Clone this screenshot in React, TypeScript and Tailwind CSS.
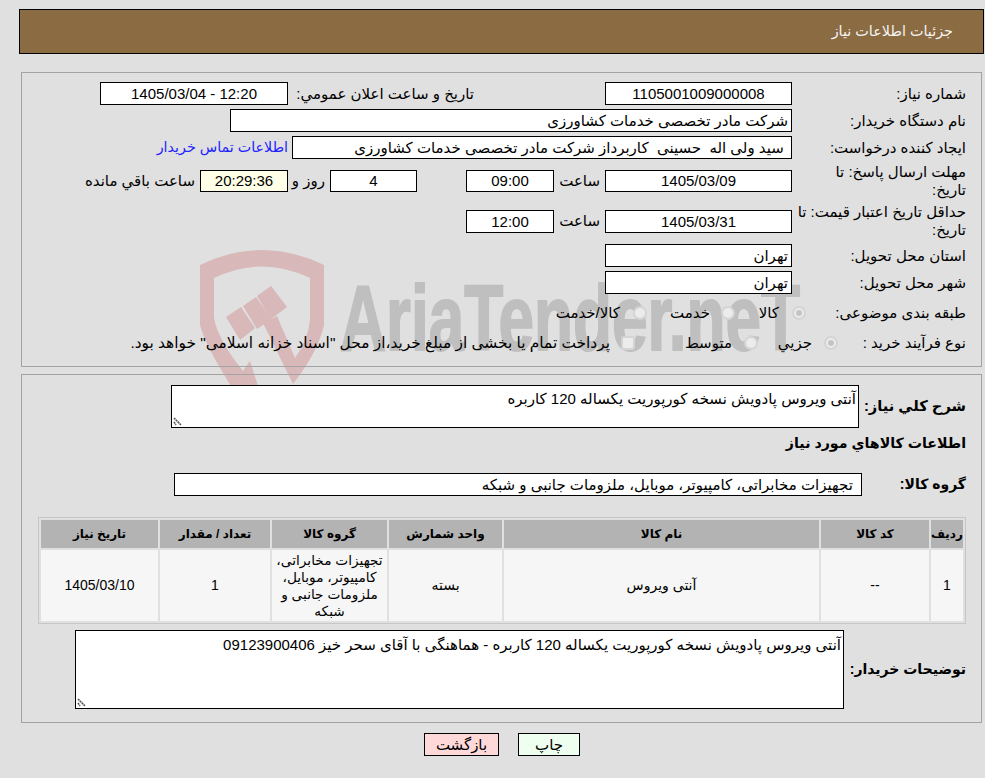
import React from "react";

const boxClass =
  "border border-black bg-white px-[3px] text-[15px] text-black outline-none";

function Field({
  value,
  className = "",
  height = "h-[23px]",
}: {
  value: string;
  className?: string;
  height?: string;
}) {
  return <input readOnly dir="rtl" value={value} className={`${boxClass} ${height} ${className}`} />;
}

function Radio({ checked = false }: { checked?: boolean }) {
  return (
    <span className="flex h-[14px] w-[14px] shrink-0 items-center justify-center rounded-full border-2 border-[#d4d4d4] bg-[#ececec]">
      {checked && <span className="h-[6px] w-[6px] rounded-full bg-[#c4c4c4]" />}
    </span>
  );
}

function Label({ children, className = "" }: { children: React.ReactNode; className?: string }) {
  return <div className={`shrink-0 text-[15px] leading-[18px] ${className}`}>{children}</div>;
}

function TextBox({ value, className = "" }: { value: string; className?: string }) {
  return (
    <div className="relative">
      <textarea
        readOnly
        dir="rtl"
        value={value}
        className={`block resize-none border border-black bg-white px-[2px] text-[15px] leading-[17px] outline-none ${className}`}
      />
      {/* resize grip */}
      <svg className="absolute bottom-[1px] left-[1px]" width="11" height="11" viewBox="0 0 11 11">
        <path d="M2 2 L9 9 M2 6 L4 9" stroke="#555" strokeWidth="1.6" strokeDasharray="2 0.6" fill="none" />
      </svg>
    </div>
  );
}

function Watermark() {
  return (
    <svg className="absolute left-0 top-0" width="985" height="400" viewBox="0 0 985 400">
      <path
        fill="#d8b8b9"
        d="M200 265 Q262 235 324 265 L324 325 Q318 352 293 384 L263 323 L277 316 L295 358 Q308 340 310 320 L310 278 Q262 255 214 278 L214 318 Q218 340 243 371 L250 361 L258 386 L231 386 Q205 345 200 325 Z"
      />
      <path fill="#d8b8b9" d="M226 317 L241 307 L255 328 L240 340 Z" />
      <path fill="#d8b8b9" d="M243 306 L256 297 L272 319 L257 329 Z" />
      <path fill="#d8b8b9" d="M257 296 L271 286 L287 307 L271 319 Z" />
      <text
        x="340"
        y="350"
        direction="ltr"
        textAnchor="start"
        fill="#bfbfbf"
        stroke="#bfbfbf"
        strokeWidth="2"
        fontFamily="Liberation Sans, sans-serif"
        fontWeight="700"
        fontSize="92"
        textLength="460"
        lengthAdjust="spacingAndGlyphs"
      >
        AriaTender.neT
      </text>
    </svg>
  );
}

export default function App() {
  return (
    <div
      dir="rtl"
      className="relative h-[778px] w-[985px] overflow-hidden bg-[#e0e0e0] font-['Liberation_Sans','DejaVu_Sans',sans-serif] text-[15px] text-black"
    >
      <Watermark />
      <div className="relative px-[1px] pt-[9px]">
        <div className="ml-[18px] flex h-[45px] items-center border border-black bg-[#8b6b41] pr-[30px] text-[14.4px] text-[#f4f4f4]">
          جزئیات اطلاعات نیاز
        </div>

        {/* top panel */}
        <section className="ml-[20px] mr-[2px] mt-[18px] h-[295px] border border-[#a3a3a3] pr-[15px] pt-[9px]">
          <div className="flex h-[23px] items-center">
            <Label className="w-[174px]">شماره نیاز:</Label>
            <Field value="1105001009000008" className="w-[187px] text-center" />
            <div className="w-[131px]" />
            <Label className="w-[186px]">تاریخ و ساعت اعلان عمومي:</Label>
            <Field value="12:20 - 1405/03/04" className="w-[188px] text-center" />
          </div>
          <div className="mt-[4px] flex h-[23px] items-center">
            <Label className="w-[174px]">نام دستگاه خریدار:</Label>
            <Field value="شرکت مادر تخصصی خدمات کشاورزی" className="w-[562px]" />
          </div>
          <div className="mt-[4px] flex h-[23px] items-center">
            <Label className="w-[174px]">ایجاد کننده درخواست:</Label>
            <Field
              value=" سید ولی اله  حسینی  کاربرداز شرکت مادر تخصصی خدمات کشاورزی"
              className="w-[500px]"
            />
            <a className="mr-[4px] text-[14.3px] text-[#2222ff]">اطلاعات تماس خریدار</a>
          </div>

          <div className="mt-[2px] flex h-[40px] items-center">
            <Label className="w-[174px] pl-[6px]">مهلت ارسال پاسخ: تا تاریخ:</Label>
            <Field value="1405/03/09" height="h-[22px]" className="w-[187px] text-center" />
            <Label className="w-[51px] pr-[5px]">ساعت</Label>
            <Field value="09:00" height="h-[22px]" className="w-[88px] text-center" />
            <div className="w-[49px]" />
            <Field value="4" height="h-[22px]" className="w-[87px] text-center" />
            <Label className="w-[42px] pr-[5px]">روز و</Label>
            <input
              readOnly
              value="20:29:36"
              className="h-[22px] w-[88px] border border-black bg-[#ffffe8] px-[3px] text-center text-[15px] outline-none"
            />
            <Label className="pr-[5px]">ساعت باقي مانده</Label>
          </div>

          <div className="flex h-[40px] items-center">
            <Label className="w-[174px]">حداقل تاریخ اعتبار قیمت: تا تاریخ:</Label>
            <Field value="1405/03/31" className="w-[187px] text-center" />
            <Label className="w-[51px] pr-[5px]">ساعت</Label>
            <Field value="12:00" className="w-[88px] text-center" />
          </div>

          <div className="mt-[3px] flex h-[23px] items-center">
            <Label className="w-[174px]">استان محل تحویل:</Label>
            <Field value="تهران" className="w-[187px]" />
          </div>
          <div className="mt-[4px] flex h-[23px] items-center">
            <Label className="w-[174px]">شهر محل تحویل:</Label>
            <Field value="تهران" className="w-[187px]" />
          </div>

          <div className="mt-[8px] flex h-[22px] items-center">
            <Label className="w-[160px]">طبقه بندی موضوعی:</Label>
            <div className="flex w-[71px] items-center">
              <Radio checked />
              <span className="mr-[13px]">کالا</span>
            </div>
            <div className="flex w-[88px] items-center">
              <Radio />
              <span className="mr-[11px]">خدمت</span>
            </div>
            <div className="flex items-center">
              <Radio />
              <span className="mr-[13px]">کالا/خدمت</span>
            </div>
          </div>

          <div className="mt-[8px] flex h-[22px] items-center">
            <Label className="w-[128px]">نوع فرآیند خرید :</Label>
            <div className="flex w-[80px] items-center">
              <Radio checked />
              <span className="mr-[12px]">جزيي</span>
            </div>
            <div className="flex w-[123px] items-center">
              <Radio />
              <span className="mr-[12px]">متوسط</span>
            </div>
            <div className="flex items-center">
              <span className="h-[14px] w-[14px] shrink-0 rounded-[3px] border-2 border-[#d4d4d4] bg-[#ececec]" />
              <span className="mr-[11px] text-[15.4px]">
                پرداخت تمام یا بخشی از مبلغ خرید،از محل "اسناد خزانه اسلامی" خواهد بود.
              </span>
            </div>
          </div>
        </section>

        {/* bottom panel */}
        <section className="ml-[20px] mr-[2px] mt-[7px] h-[349px] border border-[#a3a3a3] pr-[15px] pt-[10px]">
          <div className="flex items-center">
            <div className="w-[107px] shrink-0 text-[14.7px] font-bold">شرح کلي نياز:</div>
            <TextBox
              value="آنتی ویروس پادویش نسخه کورپوریت یکساله 120 کاربره"
              className="h-[43px] w-[688px] pt-[4px]"
            />
          </div>
          <div className="mt-[5px] h-[20px] text-[14.2px] font-bold leading-[20px]">
            اطلاعات کالاهاي مورد نياز
          </div>
          <div className="mt-[20px] flex items-center">
            <div className="w-[104px] shrink-0 text-[14px] font-bold">گروه کالا:</div>
            <Field
              value=" تجهیزات مخابراتی، کامپیوتر، موبایل، ملزومات جانبی و شبکه"
              className="w-[688px] pr-[4px]"
            />
          </div>

          <table className="mt-[21px] w-[928px] table-fixed border-separate border-spacing-[2px] border border-[#c6c6c6] text-center text-[14px]">
            <colgroup>
              <col className="w-[32px]" />
              <col className="w-[108px]" />
              <col className="w-[315px]" />
              <col className="w-[113px]" />
              <col className="w-[115px]" />
              <col className="w-[110px]" />
              <col className="w-[117px]" />
            </colgroup>
            <thead>
              <tr className="h-[28px] bg-[#b3b3b3] text-[12px] font-bold">
                <th>ردیف</th>
                <th>کد کالا</th>
                <th>نام کالا</th>
                <th>واحد شمارش</th>
                <th>گروه کالا</th>
                <th>تعداد / مقدار</th>
                <th>تاریخ نیاز</th>
              </tr>
            </thead>
            <tbody>
              <tr className="h-[71px] bg-[#f6f6f6]">
                <td>1</td>
                <td>--</td>
                <td>آنتی ویروس</td>
                <td>بسته</td>
                <td className="text-[13.7px] leading-[17px]">تجهیزات مخابراتی، کامپیوتر، موبایل، ملزومات جانبی و شبکه</td>
                <td>1</td>
                <td>1405/03/10</td>
              </tr>
            </tbody>
          </table>

          <div className="mt-[6px] flex items-center">
            <div className="w-[122px] shrink-0 text-[14px] font-bold">توضیحات خریدار:</div>
            <TextBox
              value="آنتی ویروس پادویش نسخه کورپوریت یکساله 120 کاربره - هماهنگی با آقای سحر خیز 09123900406"
              className="h-[79px] w-[769px] pt-[5px]"
            />
          </div>
        </section>

        <div className="mt-[10px] flex" dir="ltr">
          <div className="ml-[423px] flex gap-[19px]">
            <button className="h-[23px] w-[75px] border border-black bg-[#ffd9d9] text-[15px]">بازگشت</button>
            <button className="h-[23px] w-[62px] border border-black bg-[#efffef] text-[15px]">چاپ</button>
          </div>
        </div>
      </div>
    </div>
  );
}
